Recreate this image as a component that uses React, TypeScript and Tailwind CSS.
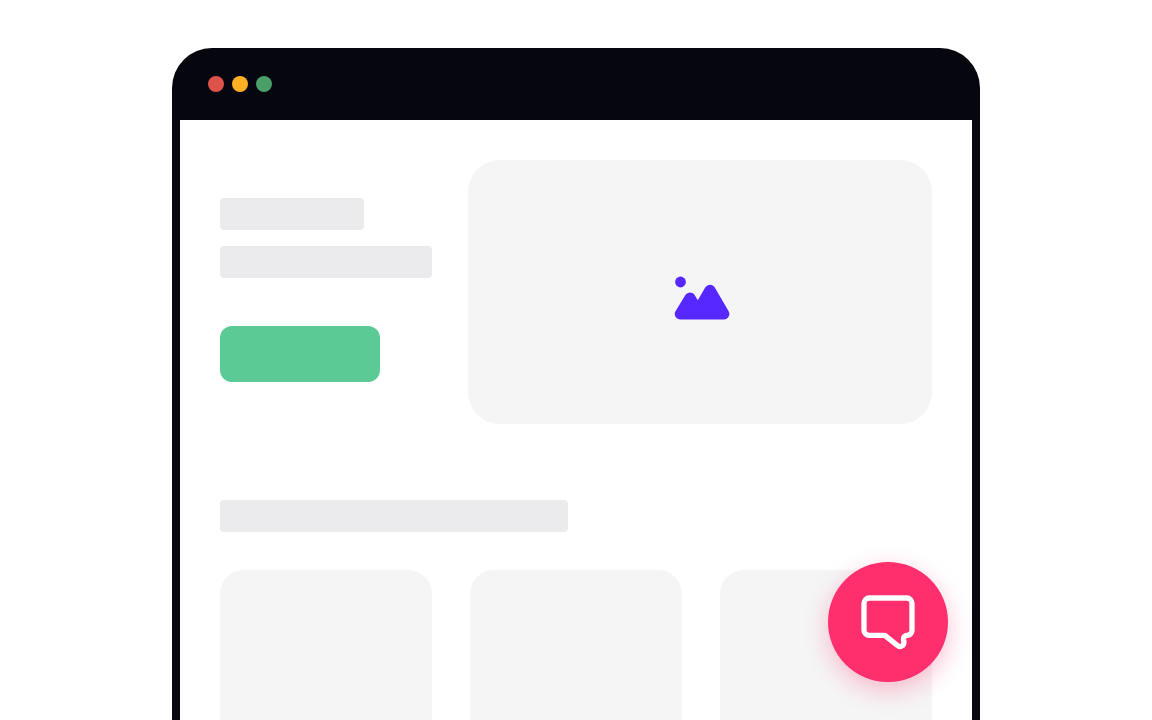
function MountainIcon() {
  return (
    <svg viewBox="0 0 64 64" className="size-16" fill="#5628ff" stroke="#5628ff" aria-hidden="true">
      <circle cx="12.5" cy="22" r="5.4" stroke="none" />
      <path
        d="M12.1 54l9.9-16.1L31.9 54zM28 54l14-23.9L56 54z"
        strokeWidth="10.8"
        strokeLinejoin="round"
      />
    </svg>
  );
}

function ChatIcon() {
  return (
    <svg
      viewBox="0 0 24 24"
      className="size-16"
      fill="none"
      stroke="white"
      strokeWidth="2"
      strokeLinejoin="round"
      aria-hidden="true"
    >
      <path d="M5 3h14a2 2 0 0 1 2 2v10.2A1.8 1.8 0 0 1 19.2 17c-.9 0-1.5.7-1.4 1.6.15.45.2.8.15 1.2a1.45 1.45 0 0 1-2.4 1L10.8 17H5a2 2 0 0 1-2-2V5a2 2 0 0 1 2-2z" />
    </svg>
  );
}

export default function App() {
  return (
    <div className="relative flex h-screen justify-center overflow-hidden bg-white px-6 pt-12">
      <div className="relative flex w-full max-w-[808px] flex-col rounded-t-[40px] bg-[#06060f] px-2">
        <header className="flex h-[72px] shrink-0 items-center gap-2 px-7">
          <span className="size-4 rounded-full bg-[#de5349]" />
          <span className="size-4 rounded-full bg-[#ffb022]" />
          <span className="size-4 rounded-full bg-[#4a9f68]" />
        </header>

        <main className="flex min-h-0 flex-1 flex-col overflow-hidden bg-white px-10 pt-10">
          <section className="flex shrink-0 gap-9">
            <div className="flex w-[212px] shrink-0 flex-col items-start pt-[38px]">
              <div className="h-8 w-36 rounded bg-[#ebebed]" />
              <div className="mt-4 h-8 w-full rounded bg-[#ebebed]" />
              <button
                type="button"
                aria-label="Get started"
                className="mt-12 h-14 w-40 rounded-xl bg-[#5bca95]"
              />
            </div>
            <div className="flex h-[264px] flex-1 items-center justify-center rounded-[32px] bg-[#f5f5f5]">
              <MountainIcon />
            </div>
          </section>

          <div className="mt-[76px] h-8 w-[348px] shrink-0 rounded bg-[#ebebed]" />

          <section className="mt-[38px] grid shrink-0 grid-cols-3 gap-[38px]">
            <div className="h-[212px] rounded-3xl bg-[#f5f5f5]" />
            <div className="h-[212px] rounded-3xl bg-[#f5f5f5]" />
            <div className="h-[212px] rounded-3xl bg-[#f5f5f5]" />
          </section>
        </main>

        <button
          type="button"
          aria-label="Open chat"
          className="absolute right-8 bottom-[38px] flex size-[120px] items-center justify-center rounded-full bg-[#ff2f6d] shadow-[0_8px_24px_rgba(255,47,109,0.3)]"
        >
          <ChatIcon />
        </button>
      </div>
    </div>
  );
}
